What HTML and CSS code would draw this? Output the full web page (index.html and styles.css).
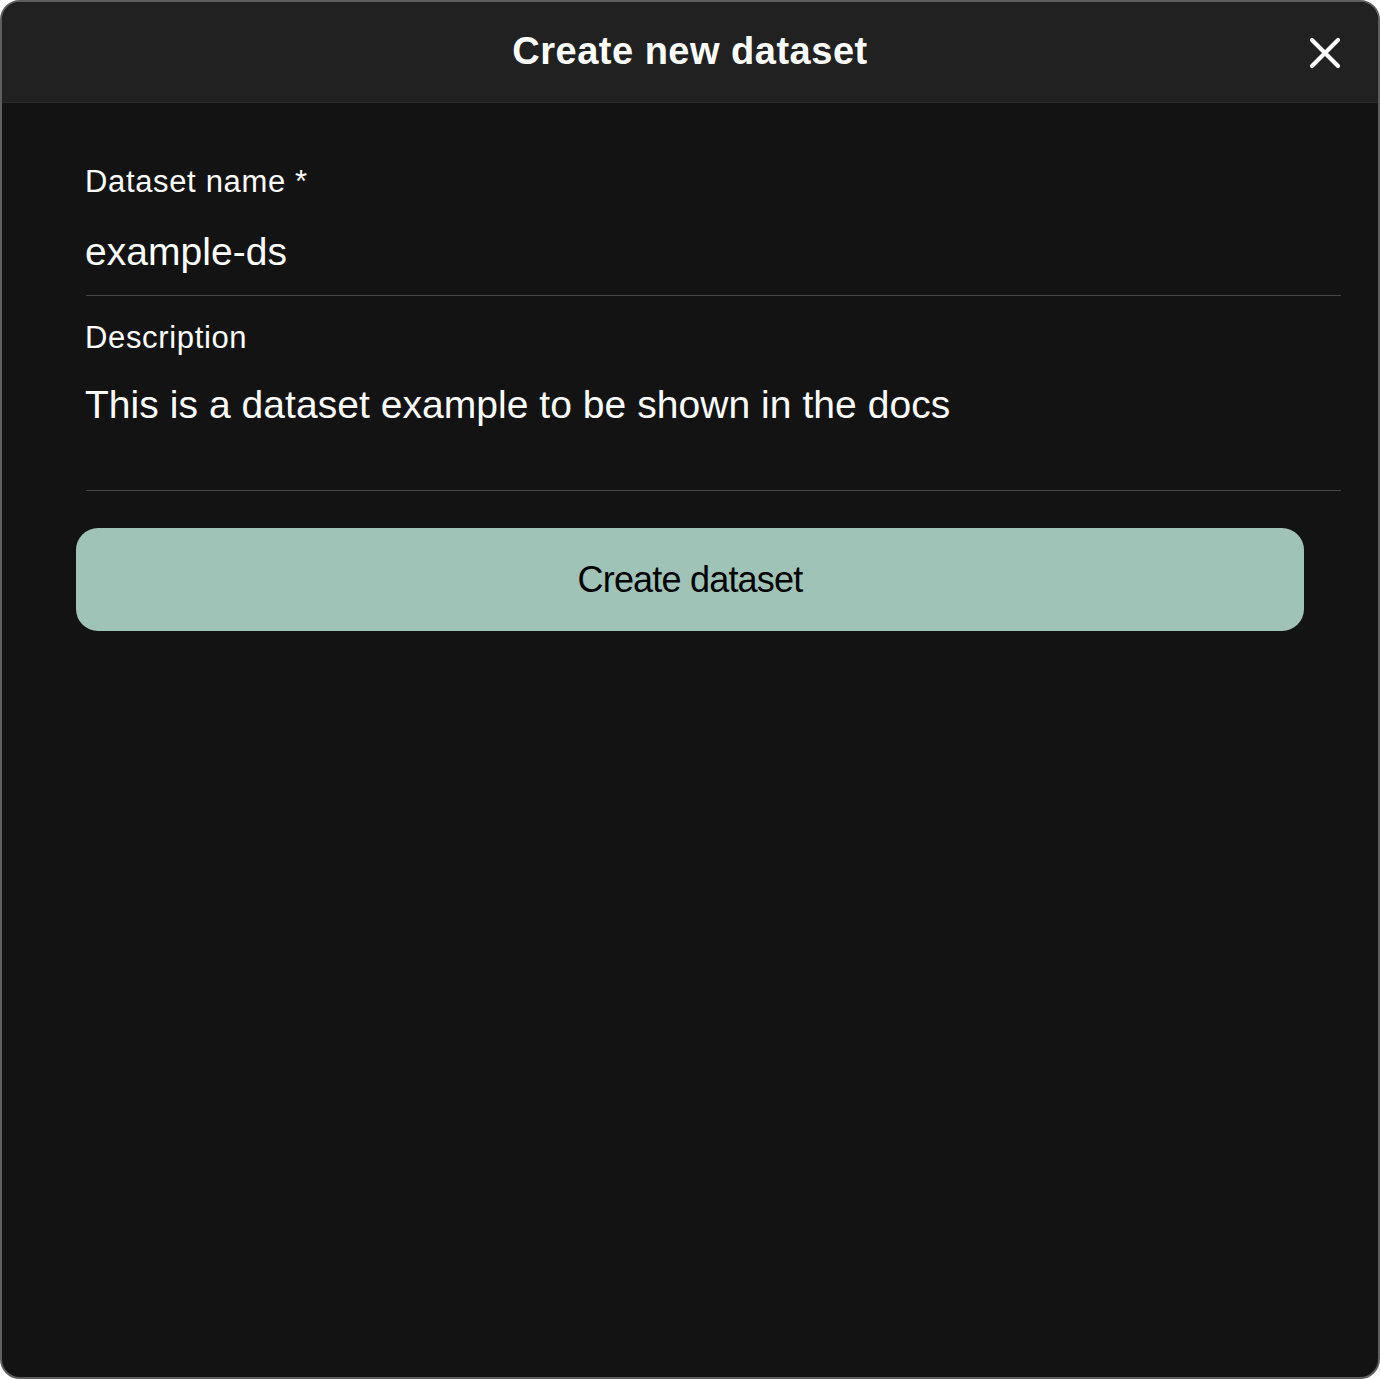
FILE: index.html
```html
<!DOCTYPE html>
<html lang="en">
<head>
<meta charset="utf-8">
<title>Create new dataset</title>
<link rel="stylesheet" href="styles.css">
</head>
<body>
<div class="dialog">
  <header class="dialog-header">
    <h1 class="dialog-title">Create new dataset</h1>
    <button class="close-btn" aria-label="Close">
      <svg width="32" height="32" viewBox="0 0 32 32"><path d="M3 3 L29 29 M29 3 L3 29" stroke="#fff" stroke-width="4.2" stroke-linecap="round" fill="none"/></svg>
    </button>
  </header>
  <main class="dialog-body">
    <div class="field">
      <label class="field-label">Dataset name *</label>
      <div class="field-input">example-ds</div>
    </div>
    <div class="field field-multi">
      <label class="field-label">Description</label>
      <div class="field-input">This is a dataset example to be shown in the docs</div>
    </div>
    <button class="submit-btn">Create dataset</button>
  </main>
</div>
</body>
</html>
```
FILE: styles.css
```css
html, body {
  margin: 0;
  padding: 0;
  background: #ffffff;
}
body {
  font-family: "Liberation Sans", Arial, sans-serif;
}
.dialog {
  box-sizing: border-box;
  width: 1380px;
  height: 1379px;
  border: 2px solid #5e5e5e;
  border-radius: 20px;
  background: #131313;
  overflow: hidden;
  display: flex;
  flex-direction: column;
}
.dialog-header {
  position: relative;
  height: 100px;
  background: #212121;
  border-bottom: 1px solid #2c2c2c;
  display: flex;
  align-items: center;
  justify-content: center;
}
.dialog-title {
  margin: 0 0 2px 0;
  color: #ffffff;
  font-size: 38px;
  font-weight: 700;
  letter-spacing: 0.5px;
  line-height: 44px;
}
.close-btn {
  position: absolute;
  right: 37px;
  top: 35px;
  width: 32px;
  height: 32px;
  padding: 0;
  border: none;
  background: none;
  display: flex;
}
.dialog-body {
  display: flex;
  flex-direction: column;
  padding: 60px 37px 0 84px;
}
.field {
  display: flex;
  flex-direction: column;
  border-bottom: 1px solid #464646;
  padding-bottom: 21px;
}
.field-label {
  margin-left: -1px;
  color: #ffffff;
  font-size: 31px;
  line-height: 37px;
  letter-spacing: 0.65px;
}
.field-input {
  margin-left: -1px;
  color: #ffffff;
  font-size: 39px;
  line-height: 45px;
  letter-spacing: 0.05px;
  margin-top: 29px;
}
.field-multi {
  padding-top: 23px;
  padding-bottom: 63px;
}
.field-multi .field-input {
  margin-top: 26px;
}
.submit-btn {
  margin: 37px 37px 0 -10px;
  height: 103px;
  padding: 1px 0 0 0;
  border: none;
  border-radius: 22px;
  background: #9fc3b7;
  color: #000000;
  font-family: "Liberation Sans", Arial, sans-serif;
  font-size: 36px;
  letter-spacing: -0.8px;
}
```
